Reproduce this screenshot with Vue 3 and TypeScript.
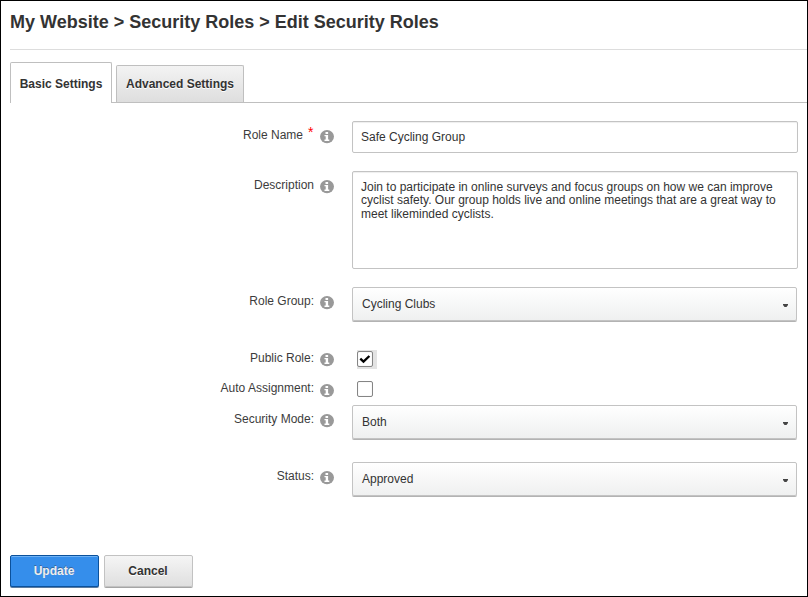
<script setup lang="ts">
import { ref } from 'vue'

interface Field {
  id: string
  label: string
  kind: 'text' | 'area' | 'select' | 'check'
  value: string | boolean
  required?: boolean
}

const tabs: string[] = ['Basic Settings', 'Advanced Settings']
const activeTab = ref(0)

const fields = ref<Field[]>([
  { id: 'name', label: 'Role Name', kind: 'text', value: 'Safe Cycling Group', required: true },
  {
    id: 'description',
    label: 'Description',
    kind: 'area',
    value:
      'Join to participate in online surveys and focus groups on how we can improve\ncyclist safety. Our group holds live and online meetings that are a great way to\nmeet likeminded cyclists.',
  },
  { id: 'group', label: 'Role Group:', kind: 'select', value: 'Cycling Clubs' },
  { id: 'public', label: 'Public Role:', kind: 'check', value: true },
  { id: 'auto', label: 'Auto Assignment:', kind: 'check', value: false },
  { id: 'mode', label: 'Security Mode:', kind: 'select', value: 'Both' },
  { id: 'status', label: 'Status:', kind: 'select', value: 'Approved' },
])
</script>

<template>
  <div class="page">
    <h1 class="title">My Website &gt; Security Roles &gt; Edit Security Roles</h1>
    <nav class="tabs">
      <button
        v-for="(tab, i) in tabs"
        :key="tab"
        class="tab"
        :class="{ active: i === activeTab }"
        @click="activeTab = i"
      >{{ tab }}</button>
    </nav>
    <form class="form" @submit.prevent>
      <div v-for="f in fields" :key="f.id" class="row" :class="[f.kind, f.id]">
        <div class="label">
          <span class="label-text">{{ f.label }}</span>
          <span v-if="f.required" class="star">*</span>
          <svg class="info" width="14" height="14" viewBox="0 0 14 14">
            <ellipse cx="7" cy="6.6" rx="7" ry="6.6" fill="#999" />
            <path d="M5.5 2h2.6v2H5.5zM4.5 5h3.6v4.6h1.2V11H4.5V9.6h1.2V6.3H4.5z" fill="#fff" />
          </svg>
        </div>
        <div v-if="f.kind === 'text'" class="box input">{{ f.value }}</div>
        <div v-else-if="f.kind === 'area'" class="box textarea">{{ f.value }}</div>
        <div v-else-if="f.kind === 'select'" class="select-box">
          <span>{{ f.value }}</span>
          <svg class="caret" width="5" height="3" viewBox="0 0 5 3">
            <path d="M0 0h5v1L3.5 3h-2L0 1z" fill="#444" />
          </svg>
        </div>
        <div v-else class="check-wrap" :class="{ focused: f.value }" @click="f.value = !f.value">
          <span class="checkbox">
            <svg v-if="f.value" width="12" height="10" viewBox="0 0 12 10">
              <path d="M1.3 4.6L4.5 7.7L10.4 2" fill="none" stroke="#000" stroke-width="2.3" />
            </svg>
          </span>
        </div>
      </div>
    </form>
    <div class="actions">
      <button class="btn primary">Update</button>
      <button class="btn">Cancel</button>
    </div>
  </div>
</template>

<style>
body {
  margin: 0;
  background: #fff;
}
</style>

<style scoped>
.page {
  box-sizing: border-box;
  width: 808px;
  height: 597px;
  border: 1px solid #000;
  padding-left: 9px;
  overflow: hidden;
  background: #fff;
  color: #333;
  font: 12px/14px 'Liberation Sans', Arial, sans-serif;
}
.title {
  box-sizing: border-box;
  margin: 0;
  height: 49px;
  padding-top: 10px;
  border-bottom: 1px solid #ddd;
  font-size: 18px;
  line-height: 22px;
  font-weight: bold;
  white-space: nowrap;
}
.tabs {
  display: flex;
  align-items: flex-end;
  gap: 4px;
  height: 52px;
  border-bottom: 1px solid #bfbfbf;
}
.tab {
  box-sizing: border-box;
  width: 128px;
  height: 37px;
  padding: 0;
  border: 1px solid #bfbfbf;
  border-bottom: 0;
  border-radius: 2px 2px 0 0;
  background: linear-gradient(#f3f3f3, #dedede);
  color: #333;
  font: bold 12px/36px 'Liberation Sans', Arial, sans-serif;
  text-shadow: 0 1px 0 #fff;
  white-space: nowrap;
}
.tab.active {
  width: 102px;
  height: 41px;
  margin-bottom: -1px;
  padding-top: 2px;
  background: #fff;
}
.form {
  height: 452px;
  box-sizing: border-box;
  padding-top: 18px;
}
.row {
  display: flex;
  height: 57px;
}
.row.text {
  height: 50px;
}
.row.area {
  height: 116px;
}
.row.public {
  height: 30px;
}
.row.auto {
  height: 31px;
}
.label {
  display: flex;
  justify-content: flex-end;
  width: 324px;
  margin-right: 18px;
  padding-top: 7px;
  height: 20px;
  color: #3c3c3c;
}
.label-text {
  white-space: nowrap;
}
.star {
  width: 6px;
  margin: -3px 0 0 5px;
  color: #f00;
  font-size: 14px;
}
.info {
  margin: 2px 0 0 6px;
  flex: none;
}
.auto .info {
  margin-top: 3px;
}
.box {
  box-sizing: border-box;
  width: 446px;
  border: 1px solid #c3c3c3;
  border-radius: 2px;
  box-shadow: inset 0 1px 1px #eee;
  padding: 8px;
}
.input {
  height: 32px;
}
.textarea {
  height: 98px;
  padding-top: 8.6px;
  line-height: 13.5px;
  white-space: pre;
}
.select-box {
  box-sizing: border-box;
  display: flex;
  align-items: center;
  justify-content: space-between;
  width: 445px;
  height: 34px;
  padding: 0 8px 0 9px;
  border: 1px solid #c3c3c3;
  border-radius: 2px;
  box-shadow: 0 1px 0 #b3b3b3;
  background: linear-gradient(#fff, #eff0f0);
}
.caret {
  margin-top: 3px;
}
.check-wrap {
  box-sizing: border-box;
  width: 20px;
  height: 19px;
  margin: 6px 0 0 5px;
  padding-top: 1px;
}
.check-wrap.focused {
  background: #e3e3e3;
}
.checkbox {
  box-sizing: border-box;
  display: flex;
  align-items: center;
  justify-content: center;
  width: 16px;
  height: 16px;
  border: 1px solid #858585;
  border-radius: 2px;
  background: #fff;
  box-shadow: inset 0 0 1px #ccc;
}
.actions {
  display: flex;
  gap: 5px;
}
.btn {
  box-sizing: border-box;
  width: 89px;
  height: 32px;
  padding: 0 1px 0 0;
  border: 1px solid #c2c2c2;
  border-radius: 2px;
  box-shadow: 0 1px 0 #a5a5a5;
  background: linear-gradient(#f5f5f5, #dfdfdf);
  color: #333;
  font: bold 12px/30px 'Liberation Sans', Arial, sans-serif;
  text-shadow: 0 1px 0 #fff;
}
.btn.primary {
  border-color: #0b519b;
  background: #358eeb;
  box-shadow: 0 1px 0 #5b7ba0, inset 0 1px 0 #6fb2f5;
  color: #eee;
  text-shadow: 0 -1px 0 #3668a0;
}
</style>
